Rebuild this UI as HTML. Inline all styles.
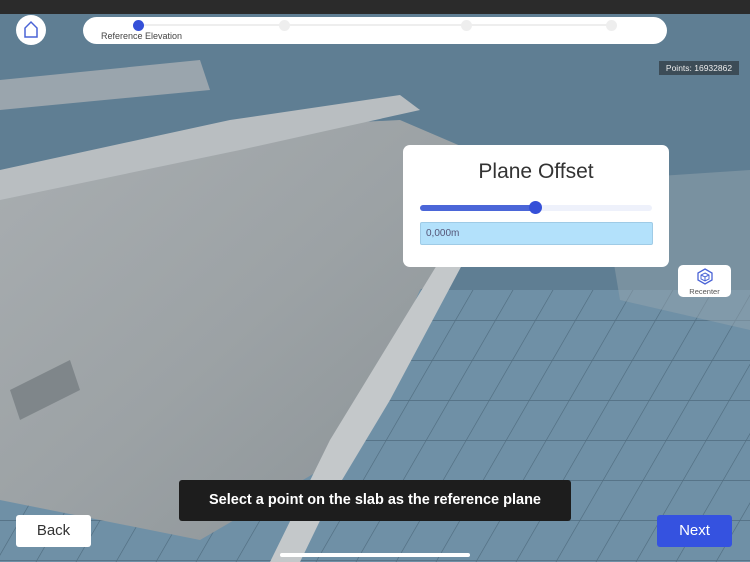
<!DOCTYPE html><html><head><style>
body{margin:0;width:750px;height:562px;overflow:hidden;position:relative;font-family:"Liberation Sans",sans-serif;background:#5d7c91}
.a{position:absolute}
</style></head><body>
<svg class="a" style="left:0;top:0" width="750" height="562">
<defs><pattern id="g" width="40" height="40" patternUnits="userSpaceOnUse" patternTransform="skewX(-30)"><path d="M0 0H40M0 0V40" stroke="#3c5566" stroke-width="1.5" fill="none"/></pattern>
<linearGradient id="fl" x1="0" y1="0" x2="1" y2="1"><stop offset="0" stop-color="#a9aeb1"/><stop offset=".5" stop-color="#9ca2a5"/><stop offset="1" stop-color="#8a9296"/></linearGradient></defs>
<rect width="750" height="562" fill="#5f7e93"/>
<rect y="290" width="750" height="272" fill="#6f90a6"/>
<rect y="290" width="750" height="272" fill="url(#g)" opacity=".6"/>
<polygon points="0,175 200,130 400,120 470,150 470,260 420,290 380,380 320,470 200,540 0,500" fill="url(#fl)"/>
<polygon points="0,170 230,120 400,95 420,110 240,150 0,200" fill="#b9bec1"/>
<polygon points="440,260 470,250 390,400 330,500 300,562 270,562 330,440" fill="#c4c8ca"/>
<polygon points="0,80 200,60 210,90 0,110" fill="#9aa5ad"/>
<polygon points="10,390 70,360 80,390 20,420" fill="#7f868a"/>
<polygon points="600,180 750,170 750,330 620,300" fill="#94a4ae" opacity=".5"/>
<rect width="750" height="14" fill="#2b2b2b"/>
</svg>
<div class="a" style="left:16px;top:15px;width:30px;height:30px;border-radius:50%;background:#fff"><svg width="30" height="30"><path d="M9 22V13L15 7L21 13V22Z" fill="none" stroke="#4a63d6" stroke-width="1.5"/></svg></div>
<div class="a" style="left:83px;top:17px;width:584px;height:27px;border-radius:14px;background:#fff">
<div class="a" style="left:55px;top:7px;width:475px;height:2px;background:#eee"></div>
<div class="a" style="left:50px;top:3px;width:11px;height:11px;border-radius:50%;background:#3550d8"></div>
<div class="a" style="left:196px;top:3px;width:11px;height:11px;border-radius:50%;background:#eee"></div>
<div class="a" style="left:378px;top:3px;width:11px;height:11px;border-radius:50%;background:#eee"></div>
<div class="a" style="left:523px;top:3px;width:11px;height:11px;border-radius:50%;background:#eee"></div>
<div class="a" style="left:18px;top:14px;font-size:9px;color:#444">Reference Elevation</div></div>
<div class="a" style="left:659px;top:61px;width:80px;height:14px;background:#3c4c57;color:#eee;font-size:8.5px;line-height:14px;text-align:center">Points: 16932862</div>
<div class="a" style="left:403px;top:145px;width:266px;height:122px;border-radius:7px;background:#fff">
<div class="a" style="left:0;top:15px;width:266px;text-align:center;font-size:21px;color:#333">Plane Offset</div>
<div class="a" style="left:17px;top:60px;width:232px;height:6px;border-radius:3px;background:#eef1fb"></div>
<div class="a" style="left:17px;top:60px;width:116px;height:6px;border-radius:3px;background:#4b66d8"></div>
<div class="a" style="left:126px;top:56px;width:13px;height:13px;border-radius:50%;background:#3550d8"></div>
<div class="a" style="left:17px;top:77px;width:226px;height:21px;border-radius:2px;background:#b3e1fb;border:1px solid #9fcbe6;font-size:10px;color:#557;line-height:21px;padding-left:5px">0,000m</div></div>
<div class="a" style="left:678px;top:265px;width:53px;height:32px;border-radius:5px;background:#fff;text-align:center">
<svg width="20" height="18" style="margin-top:2px"><path d="M10 2L17 6V13L10 17L3 13V6Z" fill="none" stroke="#4a63d6" stroke-width="1.3"/><path d="M10 6L14 8V12L10 14L6 12V8Z M6 8L10 10L14 8M10 10V14" fill="none" stroke="#4a63d6"/></svg>
<div style="font-size:7.5px;color:#555;margin-top:-3px">Recenter</div></div>
<div class="a" style="left:179px;top:480px;width:392px;height:41px;border-radius:3px;background:#1d1d1d;color:#fff;font-size:14.5px;font-weight:bold;text-align:center;line-height:41px">Select a point on the slab as the reference plane</div>
<div class="a" style="left:16px;top:515px;width:75px;height:32px;border-radius:3px;background:#fff;color:#333;font-size:15px;text-align:center;line-height:32px">Back</div>
<div class="a" style="left:657px;top:515px;width:75px;height:32px;border-radius:3px;background:#3552e0;color:#fff;font-size:15px;text-align:center;line-height:32px">Next</div>
<div class="a" style="left:280px;top:553px;width:190px;height:4px;border-radius:2px;background:#fff"></div>
</body></html>
